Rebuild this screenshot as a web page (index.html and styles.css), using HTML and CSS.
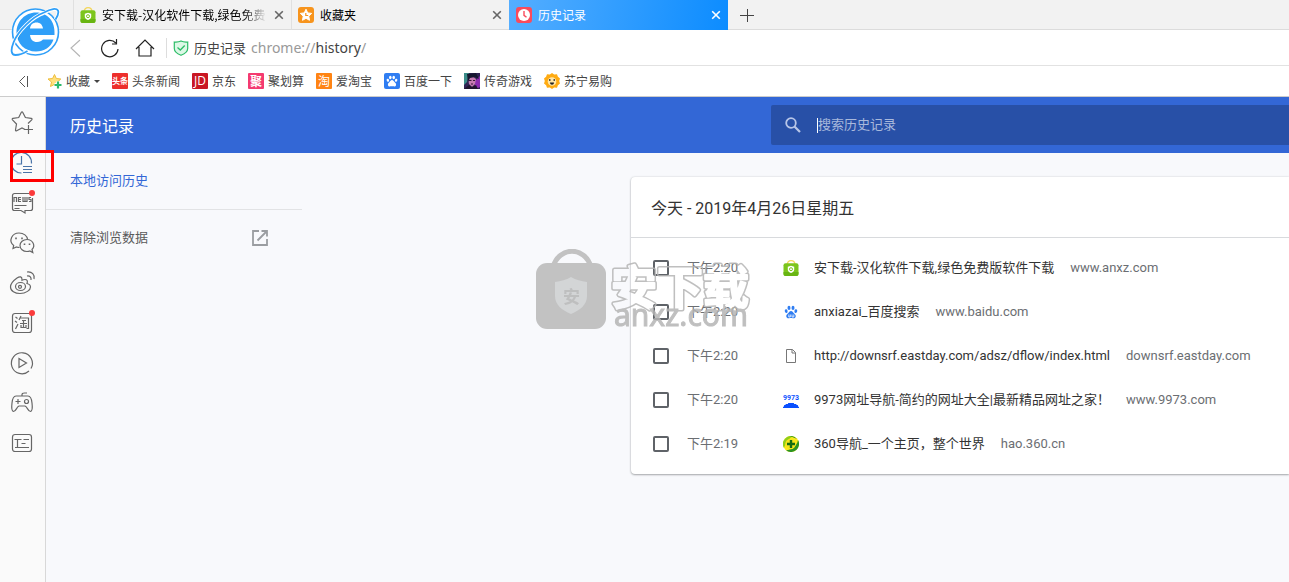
FILE: index.html
```html
<!DOCTYPE html>
<html lang="zh-CN">
<head>
<meta charset="utf-8">
<title>历史记录</title>
<link rel="stylesheet" href="styles.css">
</head>
<body>
<svg class="defs" aria-hidden="true">
  <symbol id="bag" viewBox="0 0 16 16">
    <path d="M4 5C4 -.8 12 -.8 12 5" fill="none" stroke="#f3d65a" stroke-width="1.3"/>
    <rect x="0.5" y="3.200" width="15" height="12.800" rx="2" fill="#7cc51c"/>
    <path d="M.5 12h15v2a2 2 0 0 1-2 2h-11a2 2 0 0 1-2-2z" fill="#68b512"/>
    <path d="M8 5.800l3.200 1v2.700c0 1.700-1.500 2.800-3.200 3.600-1.700-.8-3.200-1.900-3.200-3.600V6.800z" fill="#fff"/>
    <circle cx="8" cy="9.200" r="1.500" fill="none" stroke="#7cc51c"/>
  </symbol>
  <symbol id="paw" viewBox="0 0 16 16">
    <ellipse cx="5.700" cy="3.300" rx="1.700" ry="2.400"/><ellipse cx="10.300" cy="3.300" rx="1.700" ry="2.400"/>
    <ellipse cx="2.500" cy="7" rx="1.600" ry="2.100" transform="rotate(-15 2.500 7)"/><ellipse cx="13.500" cy="7" rx="1.600" ry="2.100" transform="rotate(15 13.500 7)"/>
    <path d="M8 6.800c1.700 0 2.200 1.400 3.300 2.500 1.200 1.200 2.400 2 2.100 3.900-.3 1.900-1.900 2.200-3.200 1.900-1.500-.3-2.900-.3-4.400 0-1.300.3-2.900 0-3.200-1.900-.3-1.900.9-2.700 2.100-3.900C5.800 8.200 6.300 6.800 8 6.800z"/>
  </symbol>
  <symbol id="close" viewBox="0 0 10 10"><path d="M1.200 1.200l7.600 7.600M8.800 1.200L1.200 8.800" fill="none" stroke="currentColor" stroke-width="1.600"/></symbol>
</svg>

<header class="browser">
  <svg class="logo" viewBox="0 0 50 50" aria-label="浏览器">
    <circle cx="25.500" cy="25" r="23" fill="#fff" stroke="#2f9ff8" stroke-width="1.600"/>
    <path d="M44.500 28H20c.5 4.500 3 7 7 7 3 0 4.500-1 6-2.500h10.500C41 40.500 34 44.500 26 44.500 15 44.500 6.500 36.500 6.500 25.500S15 5.500 26 5.500c11.500 0 19.500 8.500 18.500 22.500zM20 21.500h13c-.6-4-3-6-6.500-6s-6 2-6.500 6z" fill="#2f9ff8"/>
    <path d="M8 33C9 22 19 10 33 6.500 22 11 12 22 8 33z" fill="#1788c8"/>
    <path d="M34 6C41 2 46.500 1 48 3.500c1 2.500-.5 6-2.500 9M34 6C22 10 8 24 3.500 36 .5 44 1 48 5.500 48c4 0 8-1.500 12-4" fill="none" stroke="#fff" stroke-width="3.600"/>
    <path d="M34 5.500C41 1.500 46.500 1 48 3.500c1 2.500-.5 6-2.500 9M34 5.500C22 10 8 24 3.500 35.500 .5 43 1 48 5.500 48c4 0 8-1.500 12-4" fill="none" stroke="#2f9ff8" stroke-width="1.800"/>
  </svg>

  <div class="tabs">
    <div class="tab">
      <svg class="icon16"><use href="#bag"/></svg>
      <span class="tab-title tab-title-fade">安下载-汉化软件下载,绿色免费</span>
      <button class="tab-close" aria-label="关闭"><svg class="icon10"><use href="#close"/></svg></button>
    </div>
    <div class="tab">
      <svg class="icon16" viewBox="0 0 16 16"><rect width="16" height="16" rx="3" fill="#f7941d"/><path d="M8 2.200l1.700 3.700 4 .5-2.900 2.800.7 4.100L8 11.300l-3.500 2 .7-4.100L2.300 6.400l4-.5z" fill="#fff" stroke="#fff" stroke-linejoin="round"/><path d="M7.800 6v2.500h2.400" fill="none" stroke="#f7941d" stroke-width="1.200"/></svg>
      <span class="tab-title">收藏夹</span>
      <button class="tab-close" aria-label="关闭"><svg class="icon10"><use href="#close"/></svg></button>
    </div>
    <div class="tab tab-active">
      <svg class="icon16" viewBox="0 0 16 16"><rect width="16" height="16" rx="3" fill="#f94b5c"/><circle cx="8" cy="8" r="6" fill="#fff"/><path d="M8 4v4.300l2.500 2" fill="none" stroke="#f94b5c" stroke-width="1.400"/></svg>
      <span class="tab-title">历史记录</span>
      <button class="tab-close" aria-label="关闭"><svg class="icon10"><use href="#close"/></svg></button>
    </div>
    <button class="new-tab" aria-label="新标签页"><svg class="icon14" viewBox="0 0 14 14"><path d="M0 7.500h14M7.500 1v13" stroke="#444" fill="none"/></svg></button>
  </div>

  <div class="toolbar">
    <button class="nav nav-back" aria-label="后退"><svg class="icon20" viewBox="0 0 20 20"><path d="M15 2L6 10l9 8.500" fill="none" stroke="#b4b4b4" stroke-width="1.100"/></svg></button>
    <button class="nav" aria-label="刷新"><svg class="icon20" viewBox="0 0 20 20"><path d="M18 11a8.200 8.200 0 1 1-2.200-6M16.500 1v5H12" fill="none" stroke="#222" stroke-width="1.200"/></svg></button>
    <button class="nav" aria-label="主页"><svg class="icon20" viewBox="0 0 20 20"><path d="M1 11l9-9 9 9M4 9v9h12V9" fill="none" stroke="#222" stroke-width="1.200"/></svg></button>
    <div class="address">
      <svg class="icon16" viewBox="0 0 16 16"><path d="M8 1c2 1 4.500 1.200 6.700 1v6.500c0 3-3 5.300-6.700 6.800-3.700-1.500-6.700-3.800-6.700-6.800V2C3.500 2.200 6 2 8 1z" fill="#dcf8e6" stroke="#2dbd68" stroke-width="1.200"/><path d="M4.500 7.500L7.300 10 11.700 5.500" fill="none" stroke="#2dbd68" stroke-width="1.300"/></svg>
      <span class="address-name">历史记录</span>
      <span class="address-url">chrome://<span class="address-host">history</span>/</span>
    </div>
  </div>

  <nav class="bookmarks">
    <button class="collapse" aria-label="收起"><svg class="icon12" viewBox="0 0 12 12"><path d="M7 1L1.500 6.500 7 12M9.500 1v11" fill="none" stroke="#555"/></svg></button>
    <button class="bookmark"><svg class="icon16" viewBox="0 0 16 16"><path d="M8.500 1.500l1.800 4 4.500.5-3.300 3 1 4.500-4-2.200-4 2.200 1-4.500L2 6l4.600-.5z" fill="#ffe17d" stroke="#eebd3c"/><path d="M12 8.500v7M8.500 12h7" stroke="#fff" stroke-width="4"/><path d="M12 8.500v7M8.500 12h7" stroke="#2bb96c" stroke-width="2.200"/></svg>收藏<span class="caret"></span></button>
    <a class="bookmark" href="#"><span class="mark mark-red">头条</span>头条新闻</a>
    <a class="bookmark" href="#"><span class="mark mark-jd">JD</span>京东</a>
    <a class="bookmark" href="#"><span class="mark mark-pink">聚</span>聚划算</a>
    <a class="bookmark" href="#"><span class="mark mark-orange">淘</span>爱淘宝</a>
    <a class="bookmark" href="#"><svg class="icon16" viewBox="0 0 16 16"><rect width="16" height="16" rx="2" fill="#2f7df2"/><svg x="2" y="2" width="12" height="12" fill="#fff"><use href="#paw"/></svg></svg>百度一下</a>
    <a class="bookmark" href="#"><svg class="icon16" viewBox="0 0 16 16"><rect width="16" height="16" fill="#312455"/><path d="M0 0h5L3 9l-3 3z" fill="#3c8e8a"/><path d="M10 9l6-6v11l-4 2z" fill="#8d2bb0"/><path d="M4 5l4-2 4 3-1 5-3 3-3-3z" fill="#c77bb2"/><path d="M3 1l9-1 3 6-4-2-5 1-2 4z" fill="#16172f"/><path d="M5 7.500h2.500M9 7.500h2M7 11h2" stroke="#351638"/><path d="M0 16l5-4 3 2 4-2 2 4z" fill="#22152f"/></svg>传奇游戏</a>
    <a class="bookmark" href="#"><svg class="icon16" viewBox="0 0 16 16"><path d="M8 0l2.200 1.500 2.800-.3.900 2.600L16 5.600 15.200 8l.8 2.400-2.100 1.800-.9 2.600-2.800-.3L8 16l-2.200-1.500-2.800.3-.9-2.600L0 10.400.8 8 0 5.600l2.100-1.800L3 1.200l2.800.3z" fill="#ffab12"/><circle cx="8" cy="8.500" r="4.300" fill="#ffe6a8"/><path d="M5 7h1.500M9.500 7H11" stroke="#222" stroke-width="1.500"/><path d="M6 9.500h4c0 3-4 3-4 0z" fill="#222"/></svg>苏宁易购</a>
  </nav>
</header>

<div class="body">
  <aside class="dock">
    <button class="dock-item" aria-label="收藏"><svg class="icon24" viewBox="0 0 24 24"><path d="M14 18.500l-3-1.500-5.300 2.800c-.8.400-1.300 0-1.200-.8l1-6-4-4.200c-.6-.7-.3-1.300.5-1.500l5.700-.8L10.200 1.500c.5-.8 1.200-.8 1.600 0l2.600 5 5.800.9c.9.200 1.100.8.500 1.500L17 12.500"/><path d="M17.500 14v9M13 18.500h9"/></svg></button>
    <button class="dock-item dock-item-marked" aria-label="历史"><svg class="icon24 dock-history" viewBox="0 0 24 24"><path d="M10.500 22A10.300 10.300 0 1 1 20.500 12.500M10.500 5v8H5.500M12 15.500h9M12 18.500h9M12 21.500h9"/></svg></button>
    <button class="dock-item" aria-label="新闻"><svg class="icon24" viewBox="0 0 24 24"><path d="M18 2.500H3.500a2 2 0 0 0-2 2v13a2 2 0 0 0 2 2H10l4 2.500v-2.500h5.500a2 2 0 0 0 2-2V7M3.500 14.500h12M3.500 17.500h5"/><path d="M3 11V6.500h2.500V11M10 6.500H7.500v4H10M7.500 8.500H10M12 6v4.500h4V6M14 6v4.500M20 6.500h-2v2h2v2h-2"/><circle class="dot" cx="21" cy="2" r="3"/></svg></button>
    <button class="dock-item" aria-label="微信"><svg class="icon24" viewBox="0 0 24 24"><path d="M8.500 16.500c-1 0-2-.2-3-.5L2 17.500l.7-3C-3 10 1 2 8 2c5 0 8 3 8.500 6"/><path d="M16 8.500c-4 0-7 2.600-7 6s3 6 7 6c1 0 2-.2 2.800-.5l3 1.500-.8-3c4-4 .5-10-5-10z"/><path d="M5 6.500v1.800M11 6.500v1.800M13.500 12.500v1.500M18.500 12.500v1.500" stroke-width="1.600"/></svg></button>
    <button class="dock-item" aria-label="微博"><svg class="icon24" viewBox="0 0 24 24"><path d="M11 8.500c0-3-2-3.500-5-1.500-3.500 2.500-6.500 6-6.500 9 0 4 4.500 6.500 9.500 6.500 6 0 10.500-3.500 10.500-6.500 0-2-1.500-3-3.500-3.500 1-2.500 0-4-2-4-1 0-2 .2-3 .8z"/><ellipse cx="9.500" cy="15.500" rx="5" ry="4"/><circle cx="9" cy="15.800" r="1.500"/><path d="M16 5c3-.5 4.500 1.500 4 4M16 1c5-.8 8 3 7 7"/></svg></button>
    <button class="dock-item" aria-label="淘宝"><svg class="icon24" viewBox="0 0 24 24"><rect x="1.500" y="2.500" width="19" height="19" rx="2.500"/><path d="M4.500 6l2 1.500M4 10l2 1.500M4.500 18L7 13M10 5L8 9M9.500 7h8v10.500h-2M11 9.500h4M9 12.500h7M12.500 9.500V16M10 14v2.500h5V14"/><circle class="dot" cx="21" cy="2" r="3"/></svg></button>
    <button class="dock-item" aria-label="视频"><svg class="icon24" viewBox="0 0 24 24"><path d="M18 20a10.500 10.500 0 1 1 2-2.500M8 7.500l7.500 4.500L8 16.500z"/></svg></button>
    <button class="dock-item" aria-label="游戏"><svg class="icon24" viewBox="0 0 24 24"><path d="M11 5V3.500c0-1 1-1.500 2.500-1.500H16M5 5h12c2.500 0 3.500 2 4 7 .5 4 .5 8-1.500 8.500-2.500 0-3-4.500-5.500-5.500H8c-2.500 1-3 5.500-5.500 5.500-2-.5-2-4.500-1.500-8.500.5-5 1.500-7 4-7zM7 8v5M4.500 10.500h5"/><circle cx="15.500" cy="10.500" r="2"/></svg></button>
    <button class="dock-item" aria-label="阅读"><svg class="icon24" viewBox="0 0 24 24"><rect x="1.500" y="3.500" width="19" height="17" rx="2.500"/><path d="M3.500 8.500h7M6.500 8.500v8M12.500 8.500h5.500M10.500 12.500h4M4 16.500h14"/></svg></button>
  </aside>

  <div class="page">
    <header class="page-header">
      <h1 class="page-title">历史记录</h1>
      <label class="search">
        <svg class="icon18" viewBox="0 0 18 18"><circle cx="7" cy="7" r="4.800" fill="none" stroke="#b8c6e8" stroke-width="1.800"/><path d="M10.500 10.500l5.500 5.500" stroke="#b8c6e8" stroke-width="2.200"/></svg>
        <span class="text-caret"></span>
        <input class="search-input" type="text" placeholder="搜索历史记录" aria-label="搜索历史记录">
      </label>
    </header>

    <div class="page-body">
      <nav class="menu">
        <a class="menu-item menu-item-selected" href="#">本地访问历史</a>
        <a class="menu-item" href="#">清除浏览数据<svg class="icon20" viewBox="0 0 20 20"><path d="M9 4H3v14h14v-6M11.500 4H17v5.500M17 4L7.500 13.500" fill="none" stroke="#9a9da1" stroke-width="1.800"/></svg></a>
      </nav>

      <main class="card">
        <h2 class="card-title">今天 - 2019年4月26日星期五</h2>
        <ul class="entries">
          <li class="entry">
            <input class="check" type="checkbox" aria-label="安下载">
            <span class="time">下午2:20</span>
            <svg class="icon16"><use href="#bag"/></svg>
            <a class="entry-title" href="#">安下载-汉化软件下载,绿色免费版软件下载</a>
            <span class="domain">www.anxz.com</span>
          </li>
          <li class="entry">
            <input class="check" type="checkbox" aria-label="百度搜索">
            <span class="time">下午2:20</span>
            <svg class="icon16" viewBox="0 0 16 16"><svg x="1" y="1" width="14" height="14" fill="#2f7df2"><use href="#paw"/></svg><path d="M5.800 10.500v2.500h1.500v-2.500M9 10.500v2.500h1.800v-2.500" fill="none" stroke="#fff" stroke-width=".8"/></svg>
            <a class="entry-title" href="#">anxiazai_百度搜索</a>
            <span class="domain">www.baidu.com</span>
          </li>
          <li class="entry">
            <input class="check" type="checkbox" aria-label="eastday">
            <span class="time">下午2:20</span>
            <svg class="icon16" viewBox="0 0 16 16"><path d="M3.500 1.500h6l3 3v10h-9zM9 1.500V5h3.500" fill="#fff" stroke="#777"/></svg>
            <a class="entry-title" href="#">http://downsrf.eastday.com/adsz/dflow/index.html</a>
            <span class="domain">downsrf.eastday.com</span>
          </li>
          <li class="entry">
            <input class="check" type="checkbox" aria-label="9973">
            <span class="time">下午2:20</span>
            <span class="nine">9973</span>
            <a class="entry-title" href="#">9973网址导航-简约的网址大全|最新精品网址之家！</a>
            <span class="domain">www.9973.com</span>
          </li>
          <li class="entry">
            <input class="check" type="checkbox" aria-label="360导航">
            <span class="time">下午2:19</span>
            <svg class="icon16" viewBox="0 0 16 16"><circle cx="8" cy="8" r="8" fill="#fbe81c"/><path d="M1 12A8 8 0 0 1 10 .3C6 2 3 6 1 12z" fill="#8fce1b"/><path d="M3 14.200A8 8 0 0 0 15 4c-1 6-6 10-12 10.200z" fill="#2c9422"/><path d="M7 0a8 8 0 0 1 7 3C12 2 9 1 7 0z" fill="#2c9422"/><circle cx="7.500" cy="8" r="5.200" fill="#f5e51b"/><path d="M8 4v8M4 8h8" stroke="#156b12" stroke-width="2.400"/></svg>
            <a class="entry-title" href="#">360导航_一个主页，整个世界</a>
            <span class="domain">hao.360.cn</span>
          </li>
        </ul>
      </main>
    </div>

    <svg class="watermark" viewBox="0 0 220 84">
      <defs><mask id="hollow" maskUnits="userSpaceOnUse" x="0" y="0" width="220" height="84"><rect width="220" height="84" fill="#fff"/><text class="wm-cut" x="76" y="55">安下载</text></mask></defs>
      <path d="M18 18C24-3 50-3 56 18" fill="none" stroke="#b9b9b9" stroke-width="5"/>
      <rect x="1" y="14" width="70" height="66" rx="11" fill="#b9b9b9"/>
      <path d="M36 28c5 3 10 4 16 5v14c0 9-7 14-16 18-9-4-16-9-16-18V33c6-1 11-2 16-5z" fill="#cdcfd0"/>
      <text class="wm-shield" x="28" y="54">安</text>
      <text class="wm-outline" x="76" y="55" mask="url(#hollow)">安下载</text>
      <text class="wm-site" x="79" y="77">anxz.com</text>
    </svg>
  </div>
</div>
</body>
</html>
```

FILE: styles.css
```css
*, *::before, *::after { box-sizing: border-box; }

body {
  margin: 0;
  min-height: 100vh;
  display: flex;
  flex-direction: column;
  overflow: hidden;
  background: #f8f9fc;
  color: #444;
  font: 12px/16px "Noto Sans CJK SC", sans-serif;
}

button {
  display: flex;
  align-items: center;
  justify-content: center;
  padding: 0;
  border: 0;
  background: none;
  color: inherit;
  font: inherit;
}

a { color: inherit; text-decoration: none; }
svg { display: block; flex: none; }

.defs { position: absolute; width: 0; height: 0; }
.icon10 { width: 10px; height: 10px; }
.icon12 { width: 12px; height: 12px; }
.icon14 { width: 14px; height: 14px; }
.icon16 { width: 16px; height: 16px; }
.icon18 { width: 18px; height: 18px; }
.icon20 { width: 20px; height: 20px; }
.icon24 { width: 24px; height: 24px; }

/* Browser chrome */
.browser { position: relative; background: #fff; }
.logo { position: absolute; left: 10px; top: 7px; width: 50px; height: 50px; }

.tabs {
  display: flex;
  height: 30px;
  padding-left: 73px;
  background: #f2f2f2;
  border-bottom: 1px solid #dcdcdc;
}
.tab {
  display: flex;
  align-items: center;
  gap: 6px;
  width: 218px;
  height: 30px;
  padding: 0 6px;
  border-left: 1px solid #e0e0e0;
  border-bottom: 1px solid #dcdcdc;
  color: #000;
}
.tab-active {
  width: 219px;
  border-bottom: 0;
  border-left-color: #55aeff;
  background: linear-gradient(100deg, #55aeff, #0c8cff);
  color: #fff;
}
.tab-title { flex: 1; overflow: hidden; white-space: nowrap; }
.tab-title-fade { mask-image: linear-gradient(90deg, #000 85%, transparent); }
.tab-close { width: 12px; height: 16px; color: #666; }
.tab-active .tab-close { color: #fff; }
.new-tab { width: 38px; }

.toolbar {
  display: flex;
  align-items: center;
  gap: 15px;
  height: 36px;
  padding-left: 65px;
  border-bottom: 1px solid #e2e2e2;
}
.nav { width: 20px; height: 20px; }
.address {
  display: flex;
  align-items: center;
  gap: 5px;
  flex: 1;
  height: 20px;
  margin-left: -4px;
  padding-left: 6px;
  border-left: 1px solid #ddd;
  font-size: 13px;
}
.address-url { font: 14px/20px "Noto Sans", sans-serif; color: #999; }
.address-host { color: #444; }

.bookmarks {
  display: flex;
  align-items: center;
  gap: 12px;
  height: 31px;
  padding-left: 18px;
  border-bottom: 1px solid #ccc;
}
.collapse { width: 12px; height: 16px; margin-right: 4px; }
.bookmark { display: flex; align-items: center; gap: 4px; white-space: nowrap; }
.caret { border: 3px solid transparent; border-top-color: #444; border-bottom: 0; }
.mark {
  display: flex;
  align-items: center;
  justify-content: center;
  width: 16px;
  height: 16px;
  border-radius: 1px;
  color: #fff;
  font-size: 12px;
  font-weight: 700;
}
.mark-red { background: #ed2f2c; font-size: 8px; }
.mark-jd { background: #c91623; font-family: "Open Sans", sans-serif; font-weight: 400; }
.mark-pink { background: #f43a70; }
.mark-orange { background: #ff8413; font-weight: 400; }

/* Side dock */
.body { display: flex; flex: 1; }
.dock { width: 46px; padding: 6px 0 0 11px; border-right: 1px solid #d8d8d8; background: #fafafa; }
.dock-item { position: relative; width: 24px; height: 40px; }
.dock-item svg { fill: none; stroke: #666; stroke-width: 1.200; overflow: visible; }
.dock-item .dock-history { stroke: #4a74a8; }
.dock-item .dot { fill: #fb3b3b; stroke: none; }
.dock-item-marked::after {
  content: "";
  position: absolute;
  z-index: 2;
  left: -1px;
  top: 7px;
  width: 44px;
  height: 32px;
  border: 3px solid #f00;
}

/* History page */
.page { position: relative; flex: 1; min-width: 0; }
.page-header {
  display: flex;
  align-items: center;
  height: 56px;
  padding-left: 24px;
  background: #3367d6;
}
.page-title {
  width: 701px;
  margin: 0;
  color: #fff;
  font-size: 16px;
  font-weight: 400;
  line-height: 24px;
}
.search {
  display: flex;
  align-items: center;
  flex: 1;
  min-width: 0;
  height: 40px;
  padding-left: 13px;
  border-radius: 2px 0 0 2px;
  background: #2850a7;
}
.text-caret { width: 1px; height: 15px; margin-left: 15px; background: #fff; }
.search-input {
  flex: 1;
  min-width: 0;
  padding: 0 0 2px;
  border: 0;
  outline: 0;
  background: none;
  color: #fff;
  font: 13px/20px "Noto Sans CJK SC", sans-serif;
}
.search-input::placeholder { color: #a9b9dc; opacity: 1; }

.page-body { display: flex; align-items: flex-start; }
.menu { width: 256px; margin-right: 329px; }
.menu-item {
  display: flex;
  align-items: center;
  justify-content: space-between;
  height: 56px;
  padding: 0 32px 2px 24px;
  color: #5a5a5a;
  font-size: 13px;
  line-height: 20px;
}
.menu-item-selected { height: 57px; border-bottom: 1px solid #e2e3e5; color: #3367d6; }

.card {
  flex: 1;
  min-width: 0;
  margin-top: 24px;
  overflow: hidden;
  border-radius: 4px 0 0 4px;
  background: #fff;
  box-shadow: 0 1px 2px rgba(60, 64, 67, .4), 0 0 2px rgba(60, 64, 67, .2);
}
.card-title {
  height: 61px;
  margin: 0;
  padding: 20px 20px 0;
  border-bottom: 1px solid #d8dadd;
  color: #333;
  font: 400 16px/24px Roboto, "Noto Sans CJK SC", sans-serif;
}
.entries { margin: 0; padding: 8px 0; list-style: none; }
.entry {
  display: flex;
  align-items: center;
  height: 44px;
  padding-left: 22px;
  white-space: nowrap;
  font: 13px/20px Roboto, "Noto Sans CJK SC", sans-serif;
}
.check {
  appearance: none;
  flex: none;
  width: 16px;
  height: 16px;
  margin: 0 18px 0 0;
  border: 2px solid #5f6368;
  border-radius: 2px;
}
.time { width: 96px; color: #6b6e72; }
.entry-title { margin: 0 16px 0 15px; color: #333; }
.domain { color: #6b6e72; }
.nine {
  width: 16px;
  height: 16px;
  padding-top: 2px;
  background: radial-gradient(ellipse 8px 5px at 50% 100%, #0a50ff 95%, transparent);
  color: #0a50ff;
  text-align: center;
  font: 700 7px/8px Roboto, sans-serif;
}

.watermark {
  position: absolute;
  left: 489px;
  top: 152px;
  width: 220px;
  height: 84px;
  opacity: .85;
  pointer-events: none;
}
.wm-outline, .wm-cut { font: 700 46px "Noto Sans CJK SC", sans-serif; stroke-linejoin: round; }
.wm-outline { fill: #b5b5b5; stroke: #b5b5b5; stroke-width: 5px; }
.wm-cut { fill: #000; stroke: #000; stroke-width: 2px; }
.wm-shield { font: 700 17px "Noto Sans CJK SC", sans-serif; fill: #b5b5b5; }
.wm-site { font: 30px "Noto Sans", sans-serif; fill: #b5b5b5; stroke: #b5b5b5; }
```
